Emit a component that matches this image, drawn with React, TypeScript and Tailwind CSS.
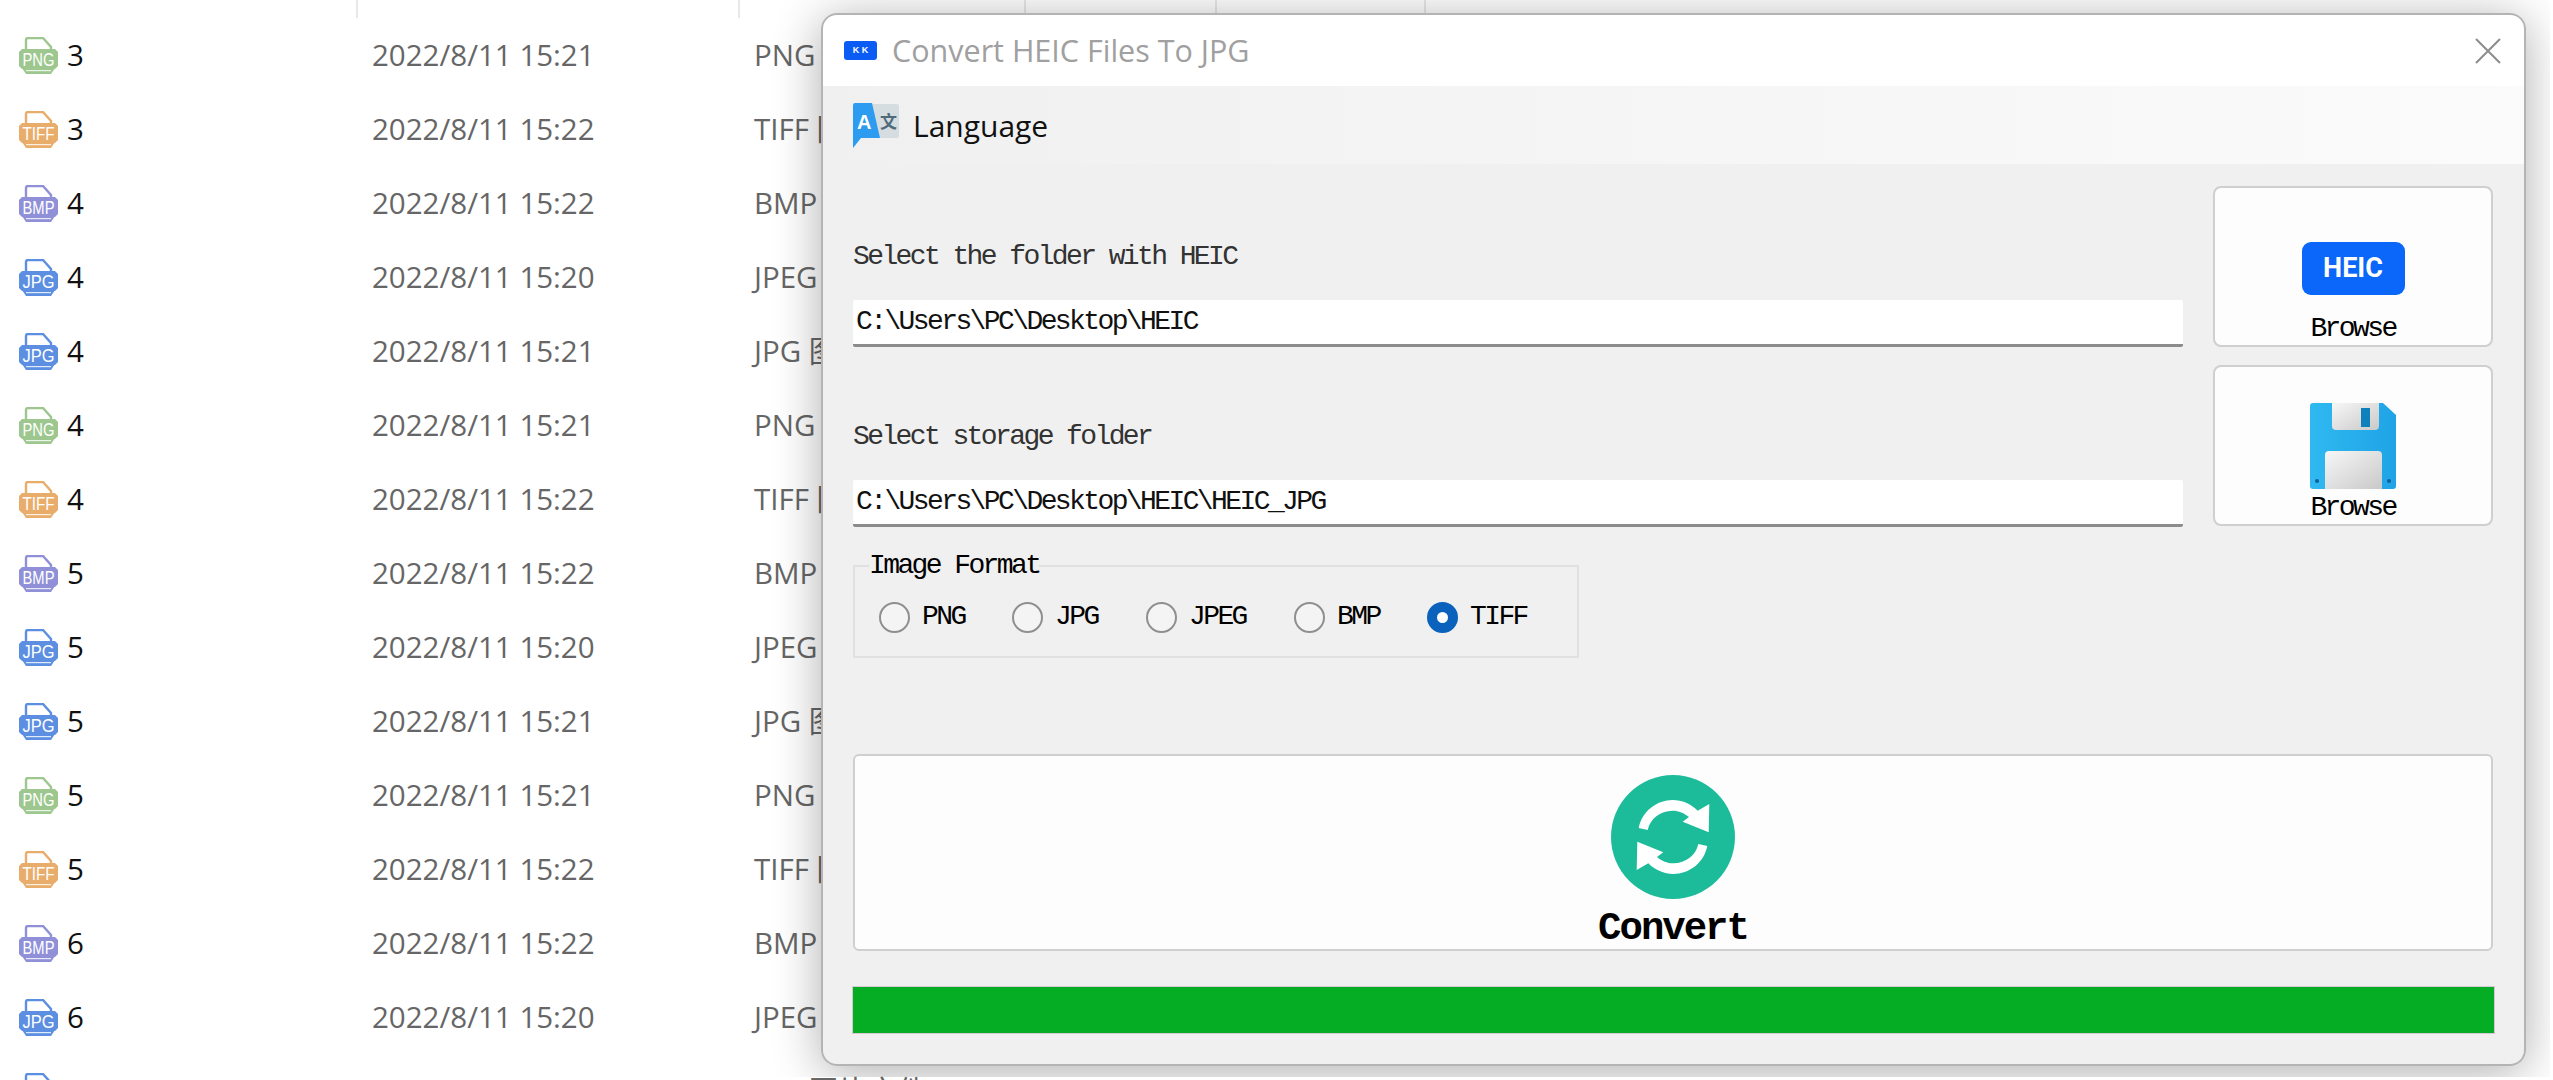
import { ReactNode } from 'react'

const files = [
  ['3', '15:21', 'PNG'],
  ['3', '15:22', 'TIFF'],
  ['4', '15:22', 'BMP'],
  ['4', '15:20', 'JPEG'],
  ['4', '15:21', 'JPG'],
  ['4', '15:21', 'PNG'],
  ['4', '15:22', 'TIFF'],
  ['5', '15:22', 'BMP'],
  ['5', '15:20', 'JPEG'],
  ['5', '15:21', 'JPG'],
  ['5', '15:21', 'PNG'],
  ['5', '15:22', 'TIFF'],
  ['6', '15:22', 'BMP'],
  ['6', '15:20', 'JPEG'],
  ['6', '15:21', 'JPG'],
]

const iconColors: Record<string, string> = {
  PNG: '#9dc78e',
  TIFF: '#e9ad6b',
  BMP: '#8f90d8',
  JPEG: '#5c8fe2',
  JPG: '#5c8fe2',
}

const FileIcon = ({ type }: { type: string }) => {
  const color = iconColors[type]
  const label = type === 'JPEG' ? 'JPG' : type
  return (
    <svg width="39" height="37" viewBox="0 0 39 37" className="shrink-0">
      <path d="M7 12V3q0-2 2-2h15l8 9v2" fill="#fff" stroke={color} strokeWidth="2.4" />
      <path d="M3 12h33l3 3v14l-3 3H3l-3-3V15z" fill={color} />
      <path d="M3 31h33l-4 6H7z" fill={color} />
      <rect x="7" y="33" width="25" height="1.2" fill="#fff" opacity="0.8" />
      <text
        x="19.5"
        y="29"
        textAnchor="middle"
        fill="#fff"
        fontSize="18"
        textLength="32"
        lengthAdjust="spacingAndGlyphs"
        fontFamily="'Liberation Sans', sans-serif"
      >
        {label}
      </text>
    </svg>
  )
}

const FileList = () => (
  <div className="font-['Open_Sans',sans-serif]">
    <div className="flex h-[18px]">
      <div className="w-[356px]" />
      <div className="w-[382px] border-l-2 border-[#e8e8e8]" />
      <div className="w-[286px] border-l-2 border-[#e8e8e8]" />
      <div className="w-[191px] border-l-2 border-[#e8e8e8]" />
      <div className="w-[209px] border-l-2 border-[#e8e8e8]" />
      <div className="w-[100px] border-l-2 border-[#e8e8e8]" />
    </div>
    {files.map((f, i) => (
      <div key={i} className="flex h-[74px] items-center text-[29.5px]">
        <div className="flex w-[356px] items-center gap-[9px] pl-[19px] text-[#111]">
          <FileIcon type={f[2]} />
          <span>{f[0]}</span>
        </div>
        <div className="w-[382px] pl-[16px] text-[#666]">2022/8/11 {f[1]}</div>
        <div className="pl-[16px] text-[#666] font-['Open_Sans','Noto_Sans_CJK_SC',sans-serif]">{f[2]} 图片文件</div>
      </div>
    ))}
  </div>
)

const AppLogo = () => (
  <div className="flex h-[19px] w-[33px] items-center justify-center rounded-[3px] bg-[#0b5cf5] text-[9px] font-bold leading-none text-white font-['Liberation_Sans',sans-serif]">
    K K
  </div>
)

const LanguageIcon = () => (
  <div className="relative h-[45px] w-[46px] shrink-0">
    <div className="absolute right-0 top-[1px] flex h-[34px] w-[30px] items-center justify-end rounded-[2px] bg-[#d5dde1] pr-[2px] text-[17px] font-bold leading-none text-[#4f6a79] font-['Noto_Sans_CJK_SC',sans-serif]">
      文
    </div>
    <svg width="27" height="45" viewBox="0 0 27 45" className="absolute left-0 top-0">
      <path d="M2 0h17l8 35H8l-8 10V2q0-2 2-2z" fill="#2d9cf0" />
    </svg>
    <span className="absolute left-[4px] top-[9px] text-[20px] font-bold leading-none text-white font-['Liberation_Sans',sans-serif]">
      A
    </span>
  </div>
)

const HeicBadge = () => (
  <div className="flex h-[53px] w-[103px] items-center justify-center rounded-[9px] bg-[#0b66fa] text-[27px] font-bold text-white font-['Roboto',sans-serif]">
    HEIC
  </div>
)

const FloppyIcon = () => (
  <svg width="86" height="86" viewBox="0 0 86 86">
    <defs>
      <linearGradient id="floppyBody" x1="0" x2="1" y1="0" y2="0">
        <stop offset="0" stopColor="#2fb9f0" />
        <stop offset="1" stopColor="#1fa3e6" />
      </linearGradient>
      <linearGradient id="floppyLabel" x1="0" x2="1" y1="0" y2="1">
        <stop offset="0" stopColor="#f7f7f7" />
        <stop offset="1" stopColor="#c9c9c9" />
      </linearGradient>
    </defs>
    <path d="M3 0h70l13 12v71q0 3-3 3H3q-3 0-3-3V3q0-3 3-3z" fill="url(#floppyBody)" />
    <path d="M22 0h47v23q0 4-4 4H26q-4 0-4-4z" fill="url(#floppyLabel)" />
    <rect x="51" y="5" width="9" height="19" fill="#0e80ba" />
    <path d="M15 52q0-4 4-4h49q4 0 4 4v34H15z" fill="url(#floppyLabel)" />
    <circle cx="7" cy="78" r="2" fill="#0f5f9a" />
    <circle cx="79" cy="78" r="2" fill="#0f5f9a" />
  </svg>
)

const arrowPath =
  'M27.7 53C31 36 46 25 61.7 25c9.3 0 18.3 4 25 10.7L98.3 29l-.6 28.3-26-10.6L78 42c-5-4-10-6.3-16.3-6.3-12.7 0-22.7 8.3-25 19.3z'

const ConvertIcon = () => (
  <svg width="124" height="124" viewBox="0 0 124 124">
    <circle cx="62" cy="62" r="62" fill="#1cbc9b" />
    <path d={arrowPath} fill="#fff" />
    <path d={arrowPath} fill="#fff" transform="rotate(180 62 62)" />
  </svg>
)

const BrowseButton = ({ icon, className }: { icon: ReactNode; className: string }) => (
  <button className={`flex h-[161px] w-[280px] flex-col items-center rounded-[8px] border-2 border-[#cfcfcf] bg-[#fdfdfd] ${className}`}>
    {icon}
    <span className="mt-auto mb-[1px] text-[28px] leading-[30px] tracking-[-2.6px] text-black">Browse</span>
  </button>
)

const PathField = ({ label, value, className }: { label: string; value: string; className: string }) => (
  <div className={className}>
    <div className="text-[28px] leading-[30px] tracking-[-2.6px] text-[#333]">{label}</div>
    <div className="mt-[28px] flex h-[47px] items-center rounded-[2px] border-b-[3px] border-[#8c8c8c] bg-white pl-[3px] text-[28px] tracking-[-2.6px] text-[#111]">
      {value}
    </div>
  </div>
)

const Radio = ({ label, checked, width }: { label: string; checked?: boolean; width: string }) => (
  <div className={`flex items-center gap-[12px] ${width}`}>
    <div
      className={
        checked
          ? 'h-[31px] w-[31px] rounded-full border-[10px] border-[#0a62bd] bg-white'
          : 'h-[31px] w-[31px] rounded-full border-2 border-[#8f8f8f] bg-[#f4f4f4]'
      }
    />
    <span className="text-[28px] tracking-[-2.6px] text-black">{label}</span>
  </div>
)

export default function App() {
  return (
    <div className="relative h-[1080px] w-[2553px] overflow-hidden bg-white">
      <FileList />

      <div className="absolute left-[821px] top-[13px] flex h-[1053px] w-[1705px] flex-col rounded-[16px] shadow-[0_6px_48px_rgba(0,0,0,0.32)] [clip-path:inset(-13px_-24px_-11px_-130px)]">
        <div className="flex h-[73px] shrink-0 items-center rounded-t-[16px] border-2 border-b-0 border-[#b4b4b4] bg-white pl-[21px] pr-[23px]">
          <AppLogo />
          <span className="ml-[15px] text-[30.5px] text-[#a0a0a0] font-['Open_Sans',sans-serif]">Convert HEIC Files To JPG</span>
          <svg width="26" height="26" viewBox="0 0 26 26" className="ml-auto">
            <path d="M1 1l24 24M25 1L1 25" stroke="#8c8c8c" strokeWidth="2" />
          </svg>
        </div>

        <div className="flex h-[78px] shrink-0 items-center gap-[14px] border-x-2 border-[#b4b4b4] bg-gradient-to-r from-[#f0f0f0] to-[#fbfbfb] pl-[30px]">
          <LanguageIcon />
          <span className="text-[30px] text-[#111] font-['Open_Sans',sans-serif]">Language</span>
        </div>

        <div className="flex flex-1 flex-col rounded-b-[16px] border-2 border-t-0 border-[#b4b4b4] bg-[#f0f0f0] px-[30px] pt-[22px] font-['Liberation_Mono',monospace]">
          <div className="flex gap-[30px]">
            <div className="w-[1330px]">
              <PathField className="pt-[56px]" label="Select the folder with HEIC" value="C:\Users\PC\Desktop\HEIC" />
              <PathField className="pt-[75px]" label="Select storage folder" value="C:\Users\PC\Desktop\HEIC\HEIC_JPG" />
              <fieldset className="mt-[24px] h-[107px] w-[726px] border-2 border-[#e0e0e0] pl-[24px] pr-0">
                <legend className="-ml-[10px] text-[28px] leading-[30px] tracking-[-2.6px] text-black">Image Format</legend>
                <div className="flex pt-[15px]">
                  <Radio label="PNG" width="w-[133px]" />
                  <Radio label="JPG" width="w-[134px]" />
                  <Radio label="JPEG" width="w-[148px]" />
                  <Radio label="BMP" width="w-[133px]" />
                  <Radio label="TIFF" checked width="w-[110px]" />
                </div>
              </fieldset>
            </div>
            <div className="flex flex-col gap-[18px]">
              <BrowseButton className="pt-[54px]" icon={<HeicBadge />} />
              <BrowseButton className="pt-[36px]" icon={<FloppyIcon />} />
            </div>
          </div>

          <button className="mt-[96px] flex h-[197px] w-[1640px] flex-col items-center rounded-[6px] border-2 border-[#cfcfcf] bg-[#fdfdfd] pt-[19px]">
            <ConvertIcon />
            <span className="mt-[10px] text-[39px] font-bold leading-[40px] tracking-[-2px] text-black">Convert</span>
          </button>

          <div className="-ml-[1px] mt-[35px] h-[48px] w-[1643px] border border-[#d8c8d4] bg-[#05ad24]" />
        </div>
      </div>
    </div>
  )
}
